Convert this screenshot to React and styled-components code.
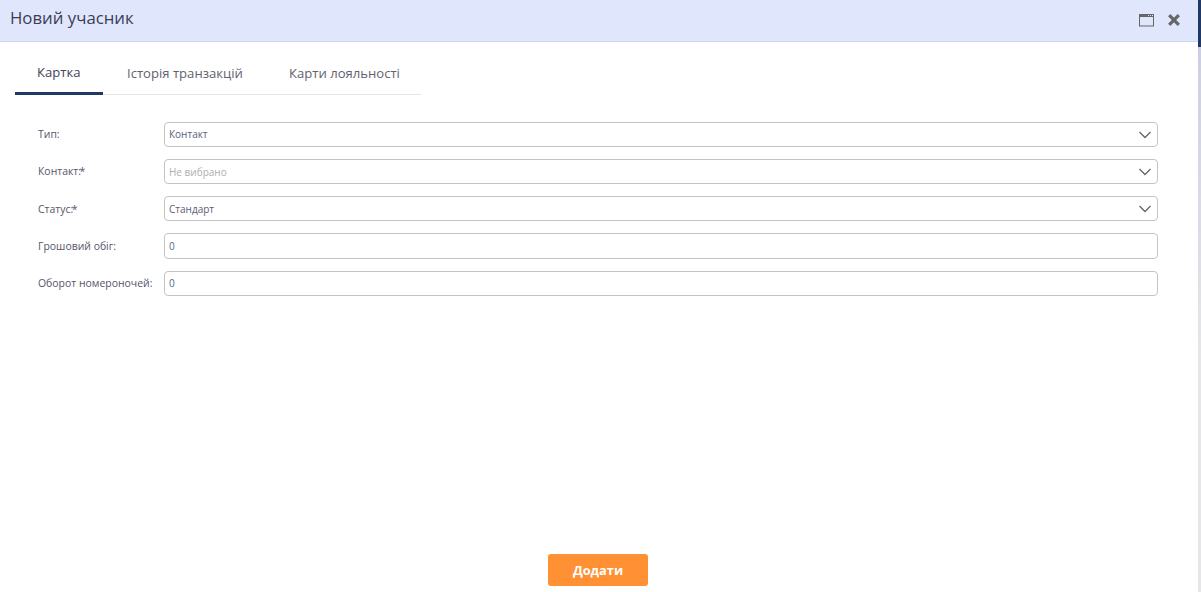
import React from 'react';
import styled, { createGlobalStyle } from 'styled-components';

const Global = createGlobalStyle`
  html, body { margin: 0; padding: 0; height: 100%; overflow: hidden; background: #fff; }
  #root { height: 592px; }
  * { box-sizing: border-box; }
`;

const Page = styled.div`
  display: flex; width: 1201px; height: 592px;
  font-family: "Open Sans", sans-serif; color: #4a4a5e;
`;
const Modal = styled.div`
  flex: 1; min-width: 0; display: flex; flex-direction: column; background: #fff;
`;
const Edge = styled.div`
  width: 3px; display: flex; flex-direction: column;
  background: linear-gradient(#c6cbe0, #e6e6e8 60%);
`;
const EdgeTop = styled.div`
  height: 47px; background: #1f3864;
`;
const Header = styled.header`
  height: 42px; flex: none; display: flex; align-items: center; justify-content: space-between;
  padding: 0 17px 5px 10px; background: #e0e6fb; border-bottom: 1px solid #cfd6ee;
`;
const Title = styled.h1`
  margin: 0; font-size: 16.8px; font-weight: 400; color: #3c3c58; line-height: 24px;
`;
const HeaderTools = styled.div`
  display: flex; align-items: center; gap: 12px; margin-top: 3px;
`;
const Tabs = styled.nav`
  display: flex; width: 406px; height: 42px; margin: 11px 0 0 15px; flex: none;
  border-bottom: 1px solid #e6e6ea;
`;
const Tab = styled.div`
  flex: none; width: ${p => p.$w}px; height: 42px; padding: 0 0 2px ${p => p.$pad}px; display: flex; align-items: center;
  white-space: nowrap; font-size: 13.1px; color: ${p => (p.$active ? '#3f4356' : '#62626f')};
  border-bottom: ${p => (p.$active ? '3px solid #1f3864' : '0')};
`;
const Form = styled.div`
  display: flex; flex-direction: column; gap: 12px; margin: 27px 0 0 38px; width: 1120px; flex: none;
`;
const Row = styled.div`
  display: flex; align-items: center; height: ${p => p.$h || 25}px;
`;
const Label = styled.label`
  width: 126px; flex: none; padding-bottom: ${p => p.$lift ?? 2}px; font-size: 10.45px; color: #55556a; white-space: nowrap;
`;
const Required = styled.span`
  margin-left: -1.5px;
`;
const Field = styled.div`
  flex: 1; height: 100%; display: flex; align-items: center; justify-content: space-between;
  padding: 0 5px ${p => p.$lift ?? 2}px 4px; border: 1px solid #c4c4c4; border-radius: 4px; background: #fff;
  font-size: 10px; color: ${p => (p.$placeholder ? '#aeaeb4' : p.$num ? '#4f6a85' : '#58607a')};
`;
const Footer = styled.div`
  margin-top: auto; padding: 0 2px 6px 0; display: flex; justify-content: center;
`;
const Submit = styled.button`
  width: 100px; height: 32px; border: 0; border-radius: 3px; background: #ff9033; color: #fff;
  font-family: inherit; font-size: 12.8px; font-weight: 700; padding: 0;
`;
const ChevronBox = styled.span`
  display: flex; margin-top: ${p => p.$drop}px;
`;

const WindowIcon = () => (
  <svg width="16" height="14" viewBox="0 0 16 14" fill="none">
    <rect x="0.5" y="1.5" width="14" height="11.5" stroke="#666" />
    <rect x="0" y="1" width="15" height="3" fill="#666" />
    <rect x="9" y="2" width="1" height="1" fill="#e0e6fb" />
    <rect x="11" y="2" width="1" height="1" fill="#e0e6fb" />
    <rect x="13" y="2" width="1" height="1" fill="#e0e6fb" />
  </svg>
);
const CloseIcon = () => (
  <svg width="14" height="14" viewBox="0 0 14 14" fill="none">
    <path d="M2.2 2.2 11.8 11.8M11.8 2.2 2.2 11.8" stroke="#666" strokeWidth="3.2" />
  </svg>
);
const Chevron = ({ drop = 2 }) => (
  <ChevronBox $drop={drop}>
    <svg width="14" height="8" viewBox="0 0 14 8" fill="none">
      <path d="M1.5 1 7 6.5 12.5 1" stroke="#666" strokeWidth="1.3" />
    </svg>
  </ChevronBox>
);

export default function App() {
  return (
    <Page>
      <Global />
      <Modal>
        <Header>
          <Title>Новий учасник</Title>
          <HeaderTools><WindowIcon /><CloseIcon /></HeaderTools>
        </Header>
        <Tabs>
          <Tab $active $w={88} $pad={22}>Картка</Tab>
          <Tab $w={162} $pad={24}>Історія транзакцій</Tab>
          <Tab $w={156} $pad={24}>Карти лояльності</Tab>
        </Tabs>
        <Form>
          <Row><Label>Тип:</Label><Field>Контакт<Chevron /></Field></Row>
          <Row><Label>Контакт:<Required>*</Required></Label><Field $placeholder $lift={0}>Не вибрано<Chevron drop={0} /></Field></Row>
          <Row><Label $lift={0}>Статус:<Required>*</Required></Label><Field $lift={0}>Стандарт<Chevron drop={0} /></Field></Row>
          <Row $h={26}><Label $lift={0}>Грошовий обіг:</Label><Field $num $lift={0}>0</Field></Row>
          <Row><Label>Оборот номероночей:</Label><Field $num>0</Field></Row>
        </Form>
        <Footer><Submit type="button">Додати</Submit></Footer>
      </Modal>
      <Edge><EdgeTop /></Edge>
    </Page>
  );
}
